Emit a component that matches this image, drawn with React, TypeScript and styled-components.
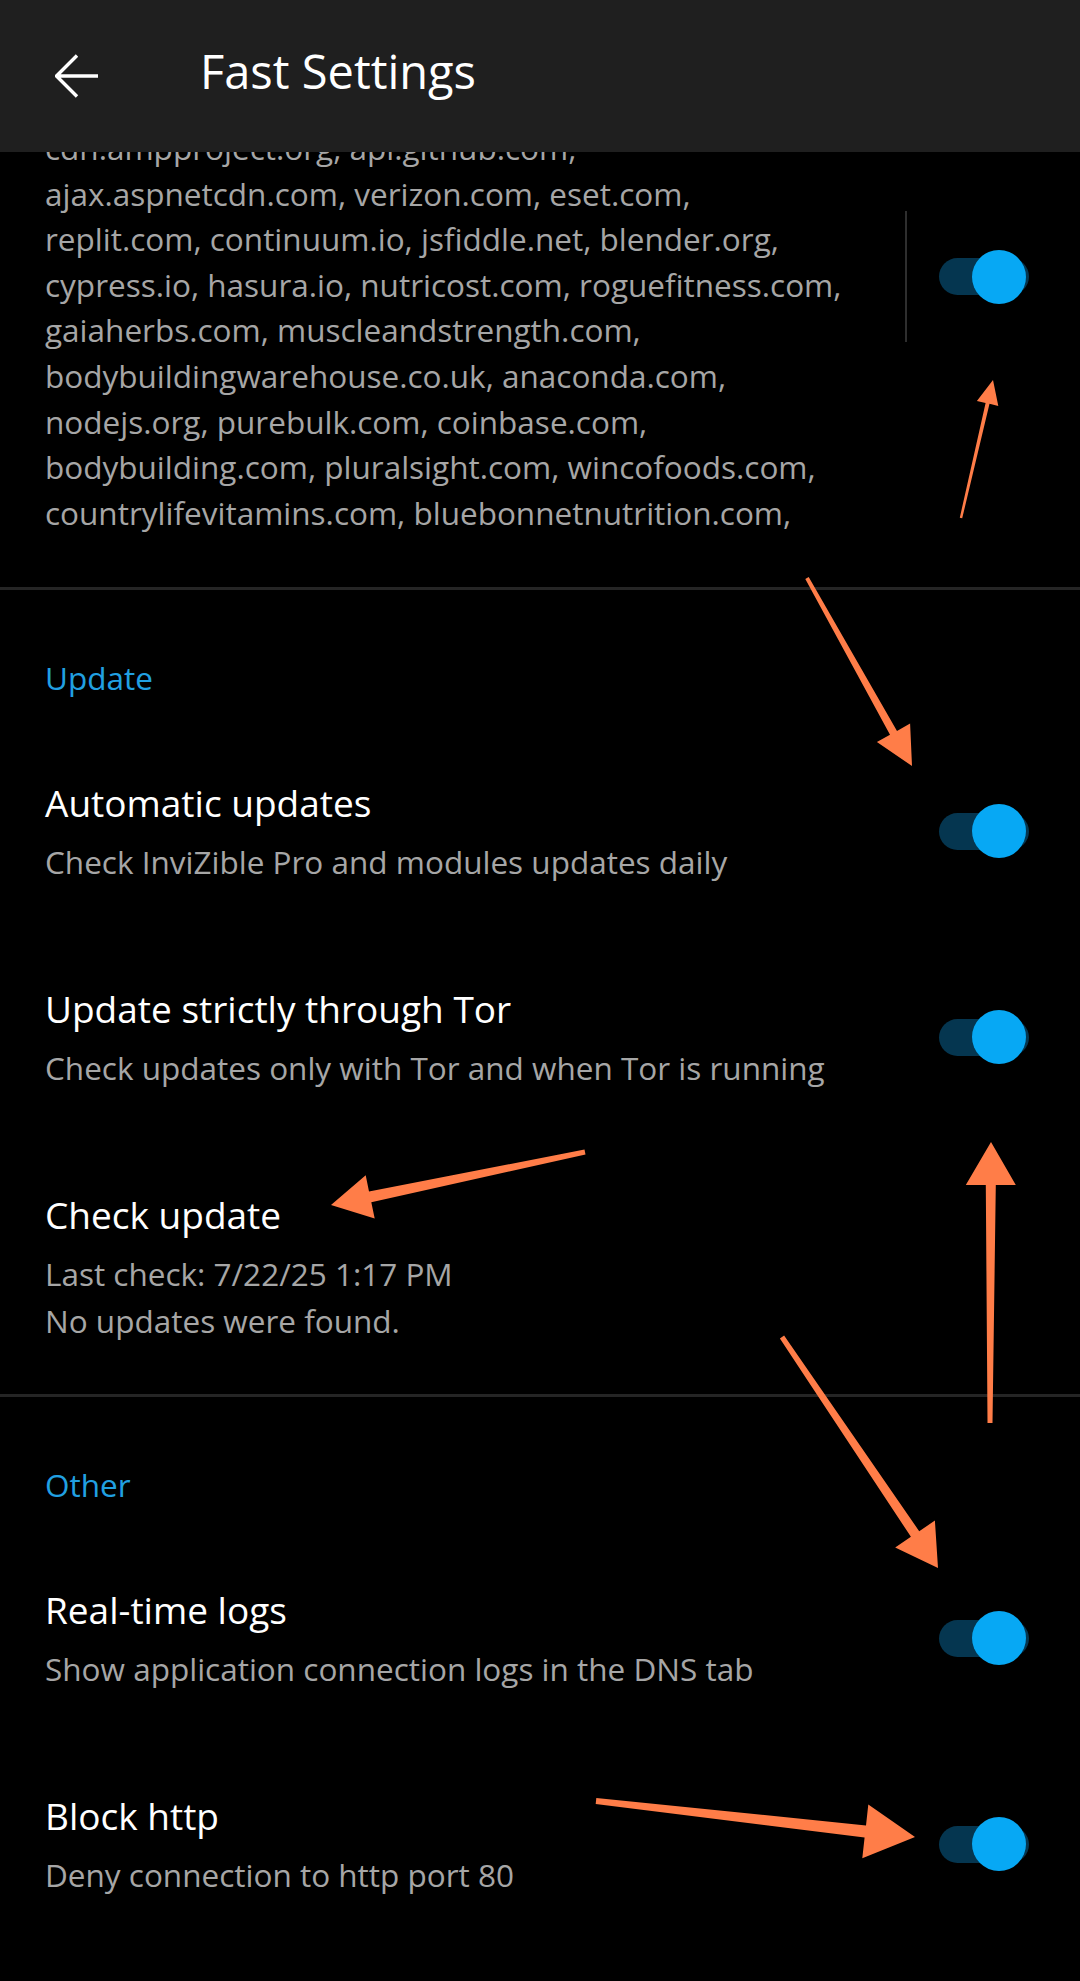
import React from "react";
import styled, { createGlobalStyle } from "styled-components";

const GlobalStyle = createGlobalStyle`
  html, body {
    margin: 0;
    padding: 0;
    background: #000000;
  }
  body {
    font-family: "Open Sans", "Noto Sans", "Liberation Sans", sans-serif;
    -webkit-font-smoothing: antialiased;
  }
`;

const Page = styled.div`
  position: relative;
  width: 1080px;
  height: 1981px;
  overflow: hidden;
  background: #000000;
  display: flex;
  flex-direction: column;
`;

const Header = styled.header`
  flex: 0 0 auto;
  height: 152px;
  box-sizing: border-box;
  padding: 0 0 10px 55px;
  background: #1f1f1f;
  display: flex;
  align-items: center;
  position: relative;
  z-index: 2;
`;

const BackButton = styled.div`
  width: 44px;
  height: 44px;
  margin-top: 10px;
  display: flex;
  align-items: center;
  justify-content: center;
`;

const HeaderTitle = styled.h1`
  margin: 0 0 0 101px;
  font-size: 47px;
  line-height: 47px;
  font-weight: 400;
  color: #ffffff;
  letter-spacing: 0;
`;

const Viewport = styled.main`
  flex: 1 1 auto;
  overflow: hidden;
`;

const ScrollContent = styled.div<{ $offset: number }>`
  margin-top: ${(p) => p.$offset}px;
  display: flex;
  flex-direction: column;
`;

const DomainRow = styled.div`
  display: flex;
  align-items: flex-start;
  padding: 0 51px 52px 45px;
`;

const DomainText = styled.div`
  flex: 1 1 auto;
  display: flex;
  flex-direction: column;
`;

const DomainLine = styled.span`
  display: block;
  white-space: nowrap;
  font-size: 31.5px;
  line-height: 45.6px;
  color: #a6a6a6;
`;

const WidgetFrame = styled.div<{ $top?: number }>`
  flex: 0 0 auto;
  display: flex;
  align-items: center;
  gap: 32px;
  margin-top: ${(p) => p.$top ?? 0}px;
`;

const Separator = styled.div`
  width: 2px;
  height: 131px;
  background: #2e2e2e;
`;

const Divider = styled.div`
  height: 3px;
  background: #252525;
`;

const Category = styled.div`
  padding: 66px 45px 29px;
  font-size: 31.5px;
  line-height: 44px;
  color: #21a0e2;
`;

const PrefRow = styled.div`
  display: flex;
  align-items: center;
  padding: 48px 51px 50px 45px;
`;

const PrefText = styled.div`
  flex: 1 1 auto;
  display: flex;
  flex-direction: column;
`;

const PrefTitle = styled.div`
  font-size: 37px;
  line-height: 52px;
  color: #ffffff;
`;

const PrefSummary = styled.div`
  margin-top: 9px;
  font-size: 31.5px;
  line-height: 47px;
  color: #a6a6a6;
`;

const SwitchTrack = styled.div<{ $on: boolean }>`
  position: relative;
  flex: 0 0 auto;
  width: 90px;
  height: 37px;
  border-radius: 18.5px;
  background: ${(p) => (p.$on ? "#053650" : "#3a3a3a")};
`;

const SwitchThumb = styled.div<{ $on: boolean }>`
  position: absolute;
  top: 50%;
  left: ${(p) => (p.$on ? "33px" : "-3px")};
  width: 54px;
  height: 54px;
  margin-top: -27px;
  border-radius: 50%;
  background: ${(p) => (p.$on ? "#07a8f4" : "#bdbdbd")};
`;

const Overlay = styled.svg`
  position: absolute;
  left: 0;
  top: 0;
  width: 1080px;
  height: 1981px;
  pointer-events: none;
  z-index: 5;
`;

const Switch: React.FC<{ on?: boolean }> = ({ on = true }) => (
  <SwitchTrack $on={on}>
    <SwitchThumb $on={on} />
  </SwitchTrack>
);

const BackArrow = () => (
  <svg width="44" height="44" viewBox="0 0 44 44" fill="none">
    <path
      d="M43 22H2.5M22 1.5L1.5 22L22 42.5"
      stroke="#ffffff"
      strokeWidth="3.4"
      strokeLinecap="butt"
      strokeLinejoin="miter"
    />
  </svg>
);

type Pt = [number, number];

function arrowPoints(
  tail: Pt,
  tip: Pt,
  headLen: number,
  headHalf: number,
  tailW: number,
  neckW: number
): string {
  const dx = tip[0] - tail[0];
  const dy = tip[1] - tail[1];
  const len = Math.hypot(dx, dy);
  const ux = dx / len;
  const uy = dy / len;
  const nx = -uy;
  const ny = ux;
  const bx = tip[0] - ux * headLen;
  const by = tip[1] - uy * headLen;
  const pts: Pt[] = [
    [tail[0] + (nx * tailW) / 2, tail[1] + (ny * tailW) / 2],
    [bx + (nx * neckW) / 2, by + (ny * neckW) / 2],
    [bx + nx * headHalf, by + ny * headHalf],
    tip,
    [bx - nx * headHalf, by - ny * headHalf],
    [bx - (nx * neckW) / 2, by - (ny * neckW) / 2],
    [tail[0] - (nx * tailW) / 2, tail[1] - (ny * tailW) / 2],
  ];
  return pts.map((p) => `${p[0].toFixed(1)},${p[1].toFixed(1)}`).join(" ");
}

const arrows: Array<[Pt, Pt, number, number, number, number]> = [
  [[961, 518], [993, 380], 24, 11, 2.5, 4],
  [[807, 578], [912, 766], 38, 19, 4, 8],
  [[585, 1152], [331, 1205], 40, 22, 5, 11],
  [[990, 1423], [991, 1142], 43, 25, 5, 10],
  [[782, 1337], [938, 1568], 41, 24, 5, 10],
  [[596, 1801], [915, 1837], 50, 27, 6, 12],
];

const domainLines = [
  "cdn.ampproject.org, api.github.com,",
  "ajax.aspnetcdn.com, verizon.com, eset.com,",
  "replit.com, continuum.io, jsfiddle.net, blender.org,",
  "cypress.io, hasura.io, nutricost.com, roguefitness.com,",
  "gaiaherbs.com, muscleandstrength.com,",
  "bodybuildingwarehouse.co.uk, anaconda.com,",
  "nodejs.org, purebulk.com, coinbase.com,",
  "bodybuilding.com, pluralsight.com, wincofoods.com,",
  "countrylifevitamins.com, bluebonnetnutrition.com,",
];

type Pref = { title: string; summary: string[]; toggle: boolean };

const updatePrefs: Pref[] = [
  {
    title: "Automatic updates",
    summary: ["Check InviZible Pro and modules updates daily"],
    toggle: true,
  },
  {
    title: "Update strictly through Tor",
    summary: ["Check updates only with Tor and when Tor is running"],
    toggle: true,
  },
  {
    title: "Check update",
    summary: ["Last check: 7/22/25 1:17 PM", "No updates were found."],
    toggle: false,
  },
];

const otherPrefs: Pref[] = [
  {
    title: "Real-time logs",
    summary: ["Show application connection logs in the DNS tab"],
    toggle: true,
  },
  {
    title: "Block http",
    summary: ["Deny connection to http port 80"],
    toggle: true,
  },
];

const PrefItem: React.FC<{ pref: Pref }> = ({ pref }) => (
  <PrefRow>
    <PrefText>
      <PrefTitle>{pref.title}</PrefTitle>
      <PrefSummary>
        {pref.summary.map((s, i) => (
          <div key={i}>{s}</div>
        ))}
      </PrefSummary>
    </PrefText>
    {pref.toggle && <Switch on />}
  </PrefRow>
);

export default function App() {
  return (
    <>
      <GlobalStyle />
      <Page>
        <Header>
          <BackButton>
            <BackArrow />
          </BackButton>
          <HeaderTitle>Fast Settings</HeaderTitle>
        </Header>
        <Viewport>
          <ScrollContent $offset={-27}>
            <DomainRow>
              <DomainText>
                {domainLines.map((l) => (
                  <DomainLine key={l}>{l}</DomainLine>
                ))}
              </DomainText>
              <WidgetFrame $top={86}>
                <Separator />
                <Switch on />
              </WidgetFrame>
            </DomainRow>
            <Divider />
            <Category>Update</Category>
            {updatePrefs.map((p) => (
              <PrefItem key={p.title} pref={p} />
            ))}
            <Divider />
            <Category>Other</Category>
            {otherPrefs.map((p) => (
              <PrefItem key={p.title} pref={p} />
            ))}
          </ScrollContent>
        </Viewport>
        <Overlay viewBox="0 0 1080 1981">
          {arrows.map((a, i) => (
            <polygon
              key={i}
              points={arrowPoints(a[0], a[1], a[2], a[3], a[4], a[5])}
              fill="#ff7d48"
            />
          ))}
        </Overlay>
      </Page>
    </>
  );
}
